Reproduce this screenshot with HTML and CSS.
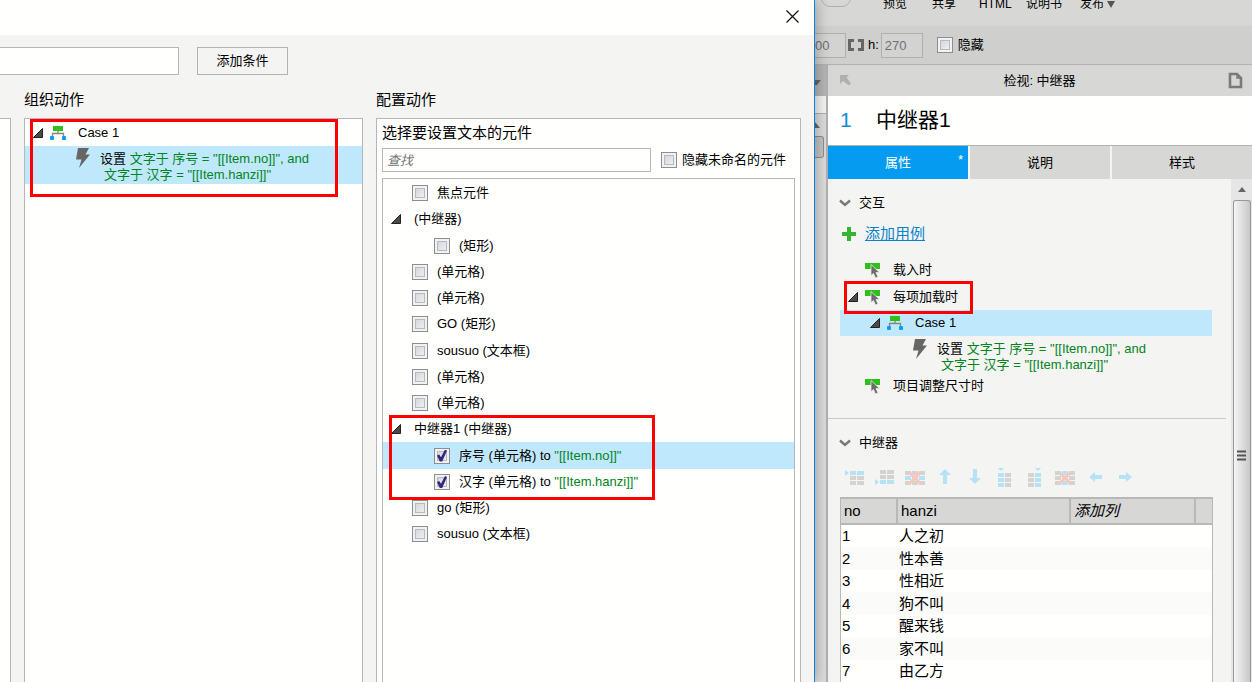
FILE: index.html
```html
<!DOCTYPE html>
<html lang="zh-CN">
<head>
<meta charset="utf-8">
<title>用例编辑</title>
<link rel="stylesheet" href="styles.css">
</head>
<body>
<svg class="defs" aria-hidden="true">
  <symbol id="tri" viewBox="0 0 10 10"><path d="M9.500 .5V9.500H.5z" fill="#4a4a4a" stroke="#222" stroke-width="1"/></symbol>
  <symbol id="case" viewBox="0 0 16 16"><path d="M8 5v4M2.500 12V8.500h11V12" fill="none" stroke="#858585" stroke-width="1.300"/><path d="M3 1h10v5H3z" fill="#2fc11a"/><rect x="0" y="11" width="4" height="4" rx="1" fill="#0c9cf5"/><rect x="12" y="11" width="4" height="4" rx="1" fill="#0c9cf5"/></symbol>
  <symbol id="bolt" viewBox="0 0 16 20"><path d="M3 0h11l-3.500 6.500H15L4 20l2.500-8.500H1z" fill="#666"/></symbol>
  <symbol id="event" viewBox="0 0 16 16"><path d="M0 1h15v6H0z" fill="#2fc11a"/><path d="M6 2.500v11l2.500-2L10.500 16l2.500-1-2-4.500h3.500z" fill="#6c6c6c" stroke="#e4efe0" stroke-width=".8"/></symbol>
  <symbol id="chev" viewBox="0 0 12 8"><path d="M1 1.500l5 4.500 5-4.500" fill="none" stroke="#777" stroke-width="2.400"/></symbol>
</svg>

<main class="dialog">
  <header class="titlebar">
    <button class="close" aria-label="关闭"><svg width="13" height="13" viewBox="0 0 13 13"><path d="M.5.5l12 12M12.500.5l-12 12" stroke="#111" stroke-width="1.200"/></svg></button>
  </header>
  <div class="condition">
    <input class="field cond-input" type="text" aria-label="条件">
    <button class="push">添加条件</button>
  </div>
  <div class="columns">
    <section class="column"><div class="panel first"></div></section>
    <section class="column">
      <h2 class="heading">组织动作</h2>
      <div class="panel">
        <div class="marked">
          <div class="row case-row"><svg class="tri"><use href="#tri"/></svg><svg class="ico"><use href="#case"/></svg><span>Case 1</span></div>
          <div class="action selected action-left"><svg class="bolt"><use href="#bolt"/></svg>
            <p class="lines">设置 <span class="value">文字于 序号 = "[[Item.no]]", and<br><span class="second">文字于 汉字 = "[[Item.hanzi]]"</span></span></p></div>
          <div class="mark mark-actions"></div>
        </div>
      </div>
    </section>
    <section class="column">
      <h2 class="heading">配置动作</h2>
      <div class="panel config">
        <h3 class="subheading">选择要设置文本的元件</h3>
        <div class="search">
          <input class="field search-input" type="text" placeholder="查找" aria-label="查找">
          <label class="check"><input type="checkbox">隐藏未命名的元件</label>
        </div>
        <div class="widgets">
          <label class="row item"><input type="checkbox">焦点元件</label>
          <div class="row parent"><svg class="tri"><use href="#tri"/></svg>(中继器)</div>
          <label class="row item child"><input type="checkbox">(矩形)</label>
          <label class="row item"><input type="checkbox">(单元格)</label>
          <label class="row item"><input type="checkbox">(单元格)</label>
          <label class="row item"><input type="checkbox">GO (矩形)</label>
          <label class="row item"><input type="checkbox">sousuo (文本框)</label>
          <label class="row item"><input type="checkbox">(单元格)</label>
          <label class="row item"><input type="checkbox">(单元格)</label>
          <div class="row parent marked"><svg class="tri"><use href="#tri"/></svg>中继器1 (中继器)<div class="mark mark-widgets"></div></div>
          <label class="row item child selected"><input type="checkbox" checked><span>序号 (单元格) to <span class="value">"[[Item.no]]"</span></span></label>
          <label class="row item child"><input type="checkbox" checked><span>汉字 (单元格) to <span class="value">"[[Item.hanzi]]"</span></span></label>
          <label class="row item"><input type="checkbox">go (矩形)</label>
          <label class="row item"><input type="checkbox">sousuo (文本框)</label>
        </div>
      </div>
    </section>
  </div>
</main>

<aside class="app">
  <nav class="toolbar">
    <button class="pill" aria-label="工具"></button>
    <button>预览</button><button>共享</button><button>HTML</button><button>说明书</button><button class="publish">发布<svg width="8" height="7" viewBox="0 0 8 7"><path d="M0 0h8L4 7z" fill="#555"/></svg></button>
  </nav>
  <div class="sizebar">
    <input class="num num-w" type="text" value="00" aria-label="宽">
    <svg class="link" viewBox="0 0 16 12"><path d="M6 1.500H1.500v9H6M10 1.500h4.500v9H10" fill="none" stroke="#666" stroke-width="3"/></svg>
    <label class="height">h:<input class="num num-h" type="text" value="270"></label>
    <label class="check"><input type="checkbox">隐藏</label>
  </div>
  <div class="body">
    <div class="canvas-edge">
      <div class="edge-head"><svg width="6" height="5" viewBox="0 0 6 5"><path d="M0 0h6L2 5H0z" fill="#666"/></svg></div>
      <div class="edge-ruler"></div>
      <div class="edge-up"><svg width="5" height="6" viewBox="0 0 5 6"><path d="M0 0l5 6H0z" fill="#666"/></svg></div>
      <div class="edge-thumb"></div>
    </div>
    <div class="inspector">
      <header class="insp-head">
        <svg width="11" height="11" viewBox="0 0 11 11"><path d="M0 0h9L6.500 2.500 11 8.500 9 10.500 3 6 0 9z" fill="#b0b0b0"/></svg>
        <span>检视: 中继器</span>
        <svg width="15" height="17" viewBox="0 0 15 17"><path d="M2 2h7l4 4v9H2z" fill="none" stroke="#7a7a7a" stroke-width="2.600"/><path d="M9 2v4h4" fill="none" stroke="#7a7a7a" stroke-width="1.500"/></svg>
      </header>
      <div class="name"><span class="index">1</span><span>中继器1</span></div>
      <div class="tabs">
        <button class="tab active">属性<span class="star">*</span></button><button class="tab">说明</button><button class="tab">样式</button>
      </div>
      <div class="scroll">
        <div class="content">
          <section class="events">
            <h3 class="group"><svg class="chev"><use href="#chev"/></svg>交互</h3>
            <div class="add"><svg width="14" height="14" viewBox="0 0 14 14"><path d="M7 0v14M0 7h14" stroke="#33b52e" stroke-width="4"/></svg><a href="#add">添加用例</a></div>
            <div class="row event"><svg class="ico"><use href="#event"/></svg>载入时</div>
            <div class="row event open marked"><svg class="tri"><use href="#tri"/></svg><svg class="ico"><use href="#event"/></svg>每项加载时<div class="mark mark-event"></div></div>
            <div class="row case-right selected"><svg class="tri"><use href="#tri"/></svg><svg class="ico"><use href="#case"/></svg><span>Case 1</span></div>
            <div class="action action-right"><svg class="bolt"><use href="#bolt"/></svg>
              <p class="lines">设置 <span class="value">文字于 序号 = "[[Item.no]]", and<br><span class="second">文字于 汉字 = "[[Item.hanzi]]"</span></span></p></div>
            <div class="row event"><svg class="ico"><use href="#event"/></svg>项目调整尺寸时</div>
          </section>
          <section class="repeater">
            <h3 class="group"><svg class="chev"><use href="#chev"/></svg>中继器</h3>
            <div class="tools">
              <button aria-label="在上方插入行"><svg viewBox="0 0 30 22"><path class="b" d="M5 4l4 3-4 3zM10 5h6v4h-6zM17 5h7v4h-7z"/><path class="g" d="M10 10h6v4h-6zM17 10h7v4h-7zM10 15h6v4h-6zM17 15h7v4h-7z"/></svg></button>
              <button aria-label="在下方插入行"><svg viewBox="0 0 30 22"><path class="g" d="M10 4h6v4h-6zM17 4h7v4h-7zM10 9h6v4h-6zM17 9h7v4h-7z"/><path class="b" d="M5 13l4 3-4 3zM10 14h6v4h-6zM17 14h7v4h-7z"/></svg></button>
              <button aria-label="删除行"><svg viewBox="0 0 30 22"><path class="g" d="M5 5h6v4H5zM12 5h6v4h-6zM19 5h6v4h-6zM5 15h6v4H5zM12 15h6v4h-6zM19 15h6v4h-6z"/><path class="b" d="M5 10h6v4H5zM12 10h6v4h-6zM19 10h6v4h-6z"/><path class="x" d="M10 7l10 10M20 7L10 17"/></svg></button>
              <button aria-label="上移"><svg viewBox="0 0 30 22"><path class="b" d="M15 3l6 6h-4v9h-4V9H9z"/></svg></button>
              <button aria-label="下移"><svg viewBox="0 0 30 22"><path class="b" d="M15 18l6-6h-4V3h-4v9H9z"/></svg></button>
              <button aria-label="在左侧插入列"><svg viewBox="0 0 30 22"><path class="b" d="M8 2h6l-3 3zM8 7h6v4H8zM8 12h6v4H8zM8 17h6v4H8z"/><path class="g" d="M15 7h6v4h-6zM15 12h6v4h-6zM15 17h6v4h-6z"/></svg></button>
              <button aria-label="在右侧插入列"><svg viewBox="0 0 30 22"><path class="b" d="M15 2h6l-3 3zM15 7h6v4h-6zM15 12h6v4h-6zM15 17h6v4h-6z"/><path class="g" d="M8 7h6v4H8zM8 12h6v4H8zM8 17h6v4H8z"/></svg></button>
              <button aria-label="删除列"><svg viewBox="0 0 30 22"><path class="g" d="M5 5h6v4H5zM19 5h6v4h-6zM5 10h6v4H5zM19 10h6v4h-6zM5 15h6v4H5zM19 15h6v4h-6z"/><path class="b" d="M12 5h6v4h-6zM12 10h6v4h-6zM12 15h6v4h-6z"/><path class="x" d="M10 7l10 10M20 7L10 17"/></svg></button>
              <button aria-label="左移"><svg viewBox="0 0 30 22"><path class="b" d="M9 11l6-5v3h7v4h-7v3z"/></svg></button>
              <button aria-label="右移"><svg viewBox="0 0 30 22"><path class="b" d="M22 11l-6-5v3H9v4h7v3z"/></svg></button>
            </div>
            <table class="data">
              <colgroup><col class="c-no"><col class="c-hanzi"><col class="c-add"><col class="c-end"></colgroup>
              <thead><tr><th>no</th><th>hanzi</th><th class="addcol">添加列</th><th></th></tr></thead>
              <tbody>
                <tr><td>1</td><td colspan="3">人之初</td></tr>
                <tr><td>2</td><td colspan="3">性本善</td></tr>
                <tr><td>3</td><td colspan="3">性相近</td></tr>
                <tr><td>4</td><td colspan="3">狗不叫</td></tr>
                <tr><td>5</td><td colspan="3">醒来钱</td></tr>
                <tr><td>6</td><td colspan="3">家不叫</td></tr>
                <tr><td>7</td><td colspan="3">由乙方</td></tr>
              </tbody>
            </table>
          </section>
        </div>
        <div class="scrollbar">
          <svg class="up" width="8" height="5" viewBox="0 0 8 5"><path d="M4 0l4 5H0z" fill="#666"/></svg>
          <div class="thumb"><svg width="10" height="11" viewBox="0 0 10 11"><path d="M0 1.500h9M0 5.500h9M0 9.500h9" stroke="#555" stroke-width="2"/></svg></div>
        </div>
      </div>
    </div>
  </div>
</aside>
</body>
</html>
```
FILE: styles.css
```css
* { box-sizing: border-box; }

body {
  display: flex;
  height: 100vh;
  margin: 0;
  overflow: hidden;
  background: #f4f4f2;
  color: #000;
  font: 13px/16px "Liberation Sans", "Noto Sans CJK SC", sans-serif;
}

button, input { font: inherit; color: inherit; margin: 0; }
button { padding: 0; border: 0; background: none; }
h2, h3, p { margin: 0; font-weight: normal; }
svg { flex: none; display: block; }
.defs { position: absolute; width: 0; height: 0; }

.value { color: #00841c; }
.selected { background: #c0e8fd; }
.tri { width: 10px; height: 10px; }
.ico { width: 16px; height: 16px; }
.bolt { width: 16px; height: 20px; }
.row { display: flex; align-items: center; height: 26px; white-space: nowrap; }
.action { display: flex; height: 38px; white-space: nowrap; }
.lines { padding: 5px 0 0 9px; }
.second { padding-left: 4px; }

.marked { position: relative; }
.mark { position: absolute; z-index: 1; border: 3px solid #f00; pointer-events: none; }
.mark-actions { top: 0; left: 5px; width: 308px; height: 78px; }
.mark-widgets { top: -1px; left: 6px; width: 266px; height: 85px; }
.mark-event { top: -2px; left: 16px; width: 129px; height: 33px; }

input[type="checkbox"] {
  appearance: none;
  flex: none;
  display: grid;
  place-items: center;
  width: 16px;
  height: 16px;
  border: 1px solid #8c8f90;
  box-shadow: inset 0 0 0 2px #f2f2f2, inset 0 0 0 3px #b4bac0;
  background: linear-gradient(135deg, #cdd1d6, #f6f6f6);
}
input[type="checkbox"]:checked::after {
  content: "";
  width: 10px;
  height: 12px;
  background: #30267c;
  clip-path: polygon(0 50%, 22% 42%, 40% 64%, 80% 0, 100% 8%, 52% 100%, 28% 100%);
}
.check { display: flex; align-items: center; gap: 5px; white-space: nowrap; }

/* dialog */
.dialog {
  position: relative;
  z-index: 2;
  display: flex;
  flex-direction: column;
  flex: 1;
  min-width: 0;
  border-right: 1px solid #0a82e0;
  background: #f4f4f2;
  box-shadow: 0 0 14px rgba(0, 0, 0, .35);
}
.titlebar { display: flex; justify-content: flex-end; align-items: center; height: 35px; padding: 0 15px 3px; background: #fffffe; }
.condition { display: flex; gap: 18px; padding-top: 12px; }
.field { border: 1px solid #b6b6b6; background: #fffffe; outline: 0; }
.cond-input { width: 179px; height: 28px; border-left: 0; }
.push { width: 91px; height: 28px; border: 1px solid #b2b2b2; }
.columns {
  display: grid;
  grid-template-columns: 11px minmax(0, 339fr) minmax(0, 425fr);
  column-gap: 13px;
  flex: 1;
  min-height: 0;
  padding: 12px 13px 0 0;
}
.column { display: flex; flex-direction: column; min-height: 0; }
.heading { height: 31px; font-size: 15px; line-height: 26px; }
.panel { flex: 1; min-height: 0; border: 1px solid #b6b6b6; border-bottom: 0; background: #fffffe; }
.panel.first { margin-top: 31px; border-left: 0; }
.case-row { height: 27px; padding-left: 8px; }
.case-row .ico { margin: 0 12px 0 7px; }
.action-left { padding: 0 0 0 50px; }
.action-left .bolt { margin-top: 2px; }

.config { display: flex; flex-direction: column; padding: 0 5px; }
.subheading { height: 29px; font-size: 15px; line-height: 27px; }
.search { display: flex; gap: 10px; }
.search-input { flex: 1; min-width: 0; height: 24px; padding: 0 4px; }
.search-input::placeholder { color: #757575; font-style: italic; opacity: 1; }
.search .check { padding-right: 9px; }
.widgets { flex: 1; min-height: 0; margin-top: 6px; padding-top: 1px; border: 1px solid #b6b6b6; border-bottom: 0; }
.widgets .row:nth-child(4n+3) { height: 27px; }
.item { gap: 9px; padding-left: 29px; }
.child { padding-left: 51px; }
.parent { gap: 13px; padding-left: 8px; }

/* application */
.app { display: flex; flex-direction: column; width: 437px; background: #d7d7d6; }
.toolbar {
  display: grid;
  grid-template-columns: 62px 49px 47px 47px 54px auto;
  justify-items: start;
  align-items: start;
  height: 26px;
  padding-left: 6px;
  font-size: 12px;
}
.toolbar button { margin-top: -4px; white-space: nowrap; }
.toolbar .pill { width: 30px; height: 11px; border: 1px solid #b0b0b0; border-radius: 0 0 9px 9px; }
.publish { display: flex; align-items: center; gap: 3px; }
.sizebar { display: flex; align-items: center; height: 39px; border-bottom: 1px solid #b1b1b1; background: #cfcfce; }
.num { height: 25px; border: 1px solid #b0b0b0; background: #d3d3d2; color: #707070; outline: 0; }
.num-w { width: 31px; padding: 0; border-left: 0; }
.num-h { width: 42px; padding: 0 3px; }
.link { width: 16px; height: 12px; margin: 0 4px 0 2px; }
.height { display: flex; align-items: center; gap: 2px; margin-right: 14px; }
.body { display: flex; flex: 1; min-height: 0; }
.canvas-edge { display: flex; flex-direction: column; width: 13px; border-right: 2px solid #b0b0b0; background: #dcdcdc; }
.edge-head { height: 31px; padding-top: 15px; background: #b5b5b5; }
.edge-ruler { height: 18px; border-bottom: 1px solid #b0b0b0; background: #f4f4f2; }
.edge-up { height: 22px; padding-top: 8px; }
.edge-thumb { height: 22px; margin-right: 2px; border: 1px solid #8f8f8f; border-left: 0; border-radius: 0 3px 3px 0; background: #c4c4c4; }

.inspector { display: flex; flex-direction: column; flex: 1; min-width: 0; background: #f4f4f2; }
.insp-head { display: flex; align-items: center; justify-content: space-between; height: 31px; padding: 0 9px 0 12px; background: #d7d7d6; }
.name { display: flex; align-items: center; height: 50px; padding: 0 12px 2px; border-bottom: 1px solid #b1b1b1; background: #fffffe; font-size: 21px; line-height: 28px; }
.index { width: 36px; color: #0d8cd8; }
.tabs { display: flex; gap: 2px; height: 33px; }
.tab { position: relative; flex: 1; background: #d7d7d6; }
.tab.active { background: #049bf0; color: #fff; }
.star { position: absolute; top: 6px; right: 5px; }
.scroll { display: flex; flex: 1; min-height: 0; }
.content { flex: 1; min-width: 0; overflow: hidden; }
.events { margin-right: 5px; padding: 11px 0 19px; border-bottom: 1px solid #c9c9c9; }
.group { display: flex; align-items: center; gap: 8px; height: 25px; padding-left: 11px; font-size: 13px; }
.chev { width: 12px; height: 8px; }
.add { display: flex; align-items: center; gap: 9px; height: 42px; padding: 0 0 4px 14px; font-size: 15px; line-height: 20px; }
.add a { color: #0a83cc; }
.event { padding-left: 37px; }
.event .ico { margin-right: 12px; }
.event.open { height: 27px; padding-left: 20px; }
.event.open .ico { margin-left: 7px; }
.case-right { margin: 0 14px 0 12px; padding-left: 30px; }
.case-right .ico { margin: 0 12px 0 7px; }
.action-right { height: 37px; padding-left: 84px; }
.action-right .bolt { margin-top: 3px; }
.repeater { margin: 0 18px 0 12px; padding-top: 11px; }
.repeater .group { margin-left: -12px; }
.tools { display: flex; padding: 11px 0 9px; }
.tools svg { width: 30px; height: 22px; }
.b { fill: #b5e2f5; }
.g { fill: #d3d3d2; }
.x { fill: none; stroke: #fcc5b8; stroke-width: 3; }

.data { width: 100%; table-layout: fixed; border-collapse: separate; border-spacing: 0; border: 1px solid #b8b8b8; border-width: 2px 1px 0; background: #fffffe; font-size: 15px; }
.c-no { width: 57px; }
.c-add { width: 125px; }
.c-end { width: 16px; }
.data th { height: 26px; padding: 0 3px; border-right: 2px solid #b8b8b8; border-bottom: 2px solid #b8b8b8; background: #d7d7d6; font-weight: normal; text-align: left; }
.data th:last-child { border-right: 0; }
.data .addcol { font-style: italic; }
.data td { height: 22px; padding: 0 1px; }
.data tr:nth-child(even) td { height: 23px; background: #fbfbfa; }

.scrollbar { display: flex; flex-direction: column; align-items: center; width: 21px; background: #e6e6e6; }
.up { margin: 8px 0; }
.thumb { display: grid; place-items: center; flex: 1; width: 18px; padding-top: 28px; border: 1px solid #999; border-bottom: 0; border-radius: 3px 3px 0 0; background: linear-gradient(90deg, #f5f5f5, #c6c8ca); }
```
